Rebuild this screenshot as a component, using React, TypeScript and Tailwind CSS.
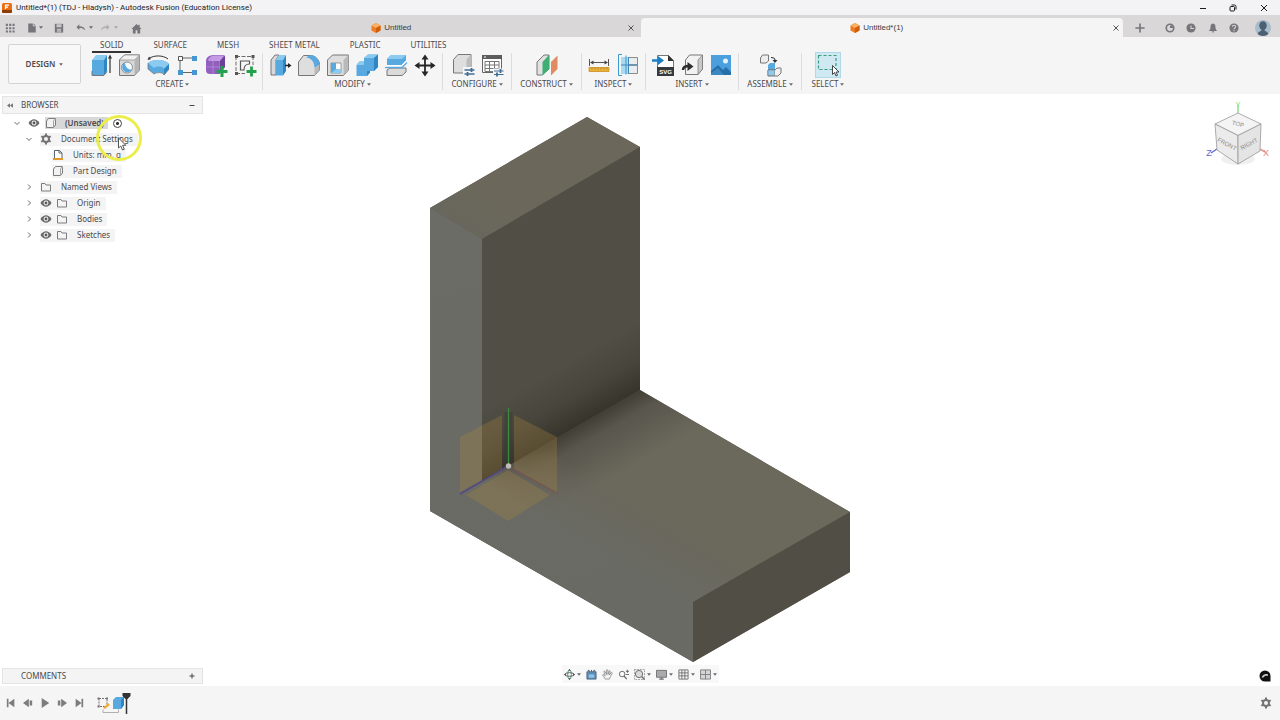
import { type ReactNode, useState } from 'react'
import clsx from 'clsx'

const BLUE = '#57a9e0'
const BLUE_LIGHT = '#8ccbf0'
const BLUE_DARK = '#2f86c4'
const LINE = '#77777a'

function Caret({ className = 'text-[#6b6b6b]' }: { className?: string }) {
  return (
    <svg viewBox="0 0 6 4" className={clsx('h-[3px] w-1 shrink-0', className)} aria-hidden="true">
      <path d="M0 0h6L3 4z" fill="currentColor" />
    </svg>
  )
}

function Icon({ children, className = 'size-6' }: { children: ReactNode; className?: string }) {
  return (
    <svg viewBox="0 0 24 24" fill="none" className={clsx('shrink-0', className)} aria-hidden="true">
      {children}
    </svg>
  )
}

function FusionCube() {
  return (
    <svg viewBox="0 0 20 20" className="size-[10px] shrink-0" aria-hidden="true">
      <path d="M10 0l9 5v10l-9 5-9-5V5z" fill="#ee7d1d" />
      <path d="M10 0l9 5-9 5-9-5z" fill="#f9b064" />
      <path d="M10 10l9-5v10l-9 5z" fill="#cf5d0d" />
    </svg>
  )
}

/* ---------- ribbon icons ---------- */

const extrude = (
  <Icon>
    <path d="M4 7l4-5h11l-3 5z" fill={BLUE_LIGHT} />
    <path d="M4 7h12v15H4z" fill={BLUE} />
    <path d="M16 7l3-5v16l-3 4z" fill={BLUE_DARK} />
    <path d="M4 18v4.500h12l3-4" stroke={LINE} />
    <path d="M22 20V3" stroke="#333" strokeWidth="1.200" />
    <path d="M20 5.500l2-4 2 4z" fill="#333" />
  </Icon>
)

const hole = (
  <Icon>
    <path d="M2.500 7l5-5h15v15l-5 5.500h-15z" fill="#d9d9d9" stroke={LINE} />
    <path d="M2.500 7l5-5h15l-5 5z" fill="#f1f1f1" stroke={LINE} strokeWidth=".6" />
    <path d="M17.500 7l5-5v15l-5 5.500z" fill="#b5b5b5" />
    <circle cx="10" cy="14.500" r="5.500" fill="#f4f9fc" stroke={LINE} strokeWidth=".8" />
    <path d="M8 9.500a5.200 5.200 0 1 0 7 7c-4 .5-7-2.500-7-7z" fill={BLUE} />
  </Icon>
)

const revolve = (
  <Icon>
    <path d="M2 10c4-4 17-4 21 1v5l-5 6c-1-3-7-3-10-1l-6-5z" fill={BLUE} />
    <path d="M2 10c4-4 17-4 21 1l-5 5c-1-3-7-3-10-1z" fill={BLUE_LIGHT} />
    <path d="M18 16l5-5v5l-5 6z" fill={BLUE_DARK} />
    <path d="M3 5.500C8 2 17 2 22 6" stroke="#333" />
    <path d="M1.500 7l1.500-3.500 2 2.700z" fill="#333" />
    <path d="M2 10v6l6 5c3-2 9-2 10 1l5-6" stroke={LINE} strokeWidth=".8" />
  </Icon>
)

const sketchPattern = (
  <Icon>
    <path d="M5 8v9M8 5h9M8 19.500h9" stroke="#666" />
    <path d="M3.500 3.500h4v4h-4z" fill="#fff" stroke="#555" />
    <path d="M17 3h5v5h-5zM3 17h5v5H3zM17 17h5v5h-5z" fill="#4497d2" />
  </Icon>
)

const createForm = (
  <Icon>
    <path d="M2 8c0-4 4-6 8-6h9c3 0 2 3 2 6v6l-5 7H6c-4 0-4-3-4-6z" fill="#9160bd" />
    <path d="M4 7c2-4 5-4.500 8-4.500h8L16 8H5z" fill="#c49be4" />
    <path d="M9 8v13M2.500 14H16M16 8v10M8 2.500L6 8" stroke="#b78bdd" strokeWidth=".8" />
    <path d="M16 8l5-5v11l-5 4z" fill="#6d3f9b" />
    <path d="M18 13v11M12.500 18.500h11" stroke="#21a24b" strokeWidth="3" />
  </Icon>
)

const createSketch = (
  <Icon>
    <path d="M3 3.500h17M3 3v18M20 3v9M3 20.500h9" stroke="#6c6c6c" strokeDasharray="4 1.500" />
    <path d="M2 2h3v3H2zM18.500 2h3v3h-3zM2 19h3v3H2z" fill="#555" />
    <path d="M7.500 8v9H11c0-4 1-6 5.500-6V8z" stroke="#555" strokeWidth="1.200" />
    <path d="M18.500 13.500v10M13.500 18.500h10" stroke="#21a24b" strokeWidth="2.800" />
  </Icon>
)

const pressPull = (
  <Icon>
    <path d="M3 7l4-5h4L8 7v15H3z" fill="#d8d8d8" stroke={LINE} />
    <path d="M8 7l3-5h7l-3 5z" fill={BLUE_LIGHT} />
    <path d="M8 7h7v15.500H8z" fill={BLUE} />
    <path d="M15 7l3-5v16l-3 4.500z" fill={BLUE_DARK} />
    <path d="M17 12.500h4" stroke="#222" strokeWidth="1.500" />
    <path d="M20 10l3.500 2.500L20 15z" fill="#222" />
  </Icon>
)

const fillet = (
  <Icon>
    <path d="M1.500 9l5-6.500H13c6 0 9.500 5 9.500 9V17l-5 5.500h-16z" fill="#dedede" stroke={LINE} />
    <path d="M9 4.500L13 2c5 0 9.500 5 9.500 9.500L17.500 15c0-6-3-10-8.500-10.500z" fill={BLUE} />
    <path d="M17.500 15.500l5-4V17l-5 5.500z" fill="#b9b9b9" />
  </Icon>
)

const shell = (
  <Icon>
    <path d="M1.500 7l5-5h16v15l-5 5.500h-16z" fill="#dedede" stroke={LINE} />
    <path d="M17.500 7l5-5v15l-5 5.500z" fill="#b9b9b9" />
    <path d="M5 10h10v10H5z" fill="#fff" stroke={LINE} strokeWidth=".7" />
    <path d="M5 10h5v6h5v4H5z" fill={BLUE} />
    <path d="M5 20l5-4h5v4z" fill={BLUE_LIGHT} />
  </Icon>
)

const combine = (
  <Icon>
    <path d="M9 5l4-3.500h10V14l-4 4h-4v1.500L12 23H1.500V12l3-3.500H9z" fill={BLUE} />
    <path d="M9 5l4-3.500h10L19 5zM1.500 12l3-3.500H9V12z" fill={BLUE_LIGHT} />
    <path d="M19 5l4-3.500V14l-4 4zM15 18v1.500L12 23v-5z" fill={BLUE_DARK} />
  </Icon>
)

const splitBody = (
  <Icon>
    <path d="M3 6l4-4h15v6l-4 4H3z" fill={BLUE} />
    <path d="M3 6l4-4h15l-4 4z" fill={BLUE_LIGHT} />
    <path d="M3 17l3-2h16v4l-4 3.500H3z" fill="#dadada" stroke={LINE} />
    <path d="M1 13h17l5-5" stroke="#fff" strokeWidth="2" />
    <path d="M1 14.500h17l5-5" stroke={BLUE} strokeWidth="1.300" />
  </Icon>
)

const move = (
  <Icon>
    <path d="M12 4v17M4 12.500h17" stroke="#262626" strokeWidth="1.800" />
    <path d="M12 1.500l3.500 5h-7zM12 23.500l3.500-5h-7zM1.500 12.500l5-3.500v7zM22.500 12.500l-5-3.500v7z" fill="#262626" />
  </Icon>
)

const configure = (
  <Icon>
    <path d="M2.500 6.500l4.500-5h13V15l-5 5H2.500z" fill="#dedede" stroke={LINE} />
    <path d="M15.500 6.500l4.500-5V15l-4.500 5z" fill="#bcbcbc" />
    <path d="M12 14h13v10H12z" fill="#f5f5f5" />
    <path d="M13.500 17h10M13.500 21h10" stroke="#3f6d95" strokeWidth="1.300" />
    <path d="M20.500 15v4M16.500 19v4" stroke="#3f6d95" strokeWidth="1.800" />
  </Icon>
)

const configTable = (
  <Icon>
    <path d="M2.500 2.500h19v17h-19z" fill="#fff" stroke="#666" />
    <path d="M2 2h20v4H2z" fill="#5c5c5c" />
    <path d="M4 4h2" stroke="#fff" />
    <path d="M5 8.500h14v10H5zM5 12h14M5 15.500h14M9.500 8.500v10M14.500 8.500v10" stroke="#777" />
    <path d="M13 15.500h11V24H13z" fill="#f5f5f5" />
    <path d="M14 18h9.500M14 21.500h9.500" stroke="#3f6d95" strokeWidth="1.200" />
    <path d="M20.500 16v4M17 19.500v4" stroke="#3f6d95" strokeWidth="1.800" />
  </Icon>
)

const construct = (
  <Icon>
    <path d="M2 9l7-7h5v14l-7 6H2z" fill="#e1e1e1" stroke={LINE} />
    <path d="M7.500 9L14 2v14l-6.500 6.500z" fill="#3fae72" />
    <path d="M16 9l6.500-6.500V16L16 22.500z" fill="#e08b62" />
  </Icon>
)

const measure = (
  <Icon>
    <path d="M2.500 6v7M21.500 6v7M4 9.500h16" stroke="#555" />
    <path d="M3 9.500l3.500-2v4zM21 9.500l-3.500-2v4z" fill="#444" />
    <path d="M2 14.500h20v4H2z" fill="#eab03c" stroke="#c9901f" strokeWidth=".8" />
    <path d="M5 14.500v2M8 14.500v2M11 14.500v2M14 14.500v2M17 14.500v2M20 14.500v2" stroke="#b5801c" strokeWidth=".8" />
  </Icon>
)

const interference = (
  <Icon>
    <path d="M5 4h8v17H5z" fill="#a8d8f2" />
    <path d="M12.500 4.500h9v7.500h-9zM12.500 12h9v8.500h-9z" fill="#e9edf0" stroke="#8b8b8b" />
    <path d="M5 12h16M12.500 4v17" stroke="#3f87b9" />
    <path d="M6 1.500H2.500v21H6M10 2.500v19" stroke="#3c9acd" />
  </Icon>
)

const insertSvg = (
  <Icon>
    <path d="M6.500 2.500h11l5 5V15h-16z" fill="#fff" stroke="#777" />
    <path d="M17 2l6 6h-6z" fill="#333" />
    <path d="M6 14h17v9H6z" fill="#35393d" />
    <path d="M1 7.500h7" stroke="#1c7fc4" strokeWidth="2.500" />
    <path d="M7 3l6 4.500L7 12z" fill="#1c7fc4" />
    <text x="14.500" y="21" textAnchor="middle" fontSize="6" fontWeight="700" fill="#fff" fontFamily="Liberation Sans, sans-serif">SVG</text>
  </Icon>
)

const insertDerive = (
  <Icon>
    <path d="M5.500 7l4-5h13v14l-4.500 5.500H5.500z" fill="#f2f2f2" stroke={LINE} />
    <path d="M18 7l4.500-5v14L18 21.500z" fill="#c9c9c9" stroke={LINE} strokeWidth=".7" />
    <path d="M3 17c0-3 2-4 6-4" stroke="#2d2d2d" strokeWidth="2.500" />
    <path d="M7.500 9l6 4.500-6 4.500z" fill="#2d2d2d" />
  </Icon>
)

const insertCanvas = (
  <Icon>
    <path d="M2 2h20v20H2z" fill="#4b9fdd" />
    <circle cx="16.500" cy="8" r="2.500" fill="#e6f2fa" />
    <path d="M2 18l7-6 5 5 3-3 5 5v3H2z" fill="#266fa9" />
    <path d="M2 20l7-5 6 7H2z" fill="#3b87bf" />
  </Icon>
)

const assemble = (
  <Icon>
    <path d="M2.500 5l2-3h6v6L8 10H2.500z" fill="#ededed" stroke={LINE} />
    <path d="M13 4.500c3 0 4 .5 4 3" stroke="#333" strokeWidth="1.200" />
    <path d="M14.500 7h5L17 10z" fill="#333" />
    <path d="M10 12l2-2h5v12h-7z" fill={BLUE} />
    <path d="M10 17h7l2-2h4v5l-3 3H10z" fill="#f0f0f0" stroke={LINE} />
    <path d="M10 17h6.500v5.500H10z" fill={BLUE_LIGHT} stroke={LINE} strokeWidth=".6" />
  </Icon>
)

const selectTool = (
  <Icon>
    <path d="M2.500 2.500h17.500v14H2.500z" stroke="#3d9c79" strokeWidth="1.200" strokeDasharray="3 2" />
    <path d="M16.500 12.500v9l2-2 1.500 3.500 1.500-.7-1.500-3.300h3z" fill="#fff" stroke="#333" strokeWidth=".9" />
  </Icon>
)

const RIBBON_TABS = ['SOLID', 'SURFACE', 'MESH', 'SHEET METAL', 'PLASTIC', 'UTILITIES']

interface Tool {
  name: string
  icon: ReactNode
}

const GROUPS: { label: string; width: string; tools: Tool[] }[] = [
  {
    label: 'CREATE',
    width: 'w-[180px]',
    tools: [
      { name: 'Extrude', icon: extrude },
      { name: 'Hole', icon: hole },
      { name: 'Revolve', icon: revolve },
      { name: 'Pattern', icon: sketchPattern },
      { name: 'Create Form', icon: createForm },
      { name: 'Create Sketch', icon: createSketch },
    ],
  },
  {
    label: 'MODIFY',
    width: 'w-[180px]',
    tools: [
      { name: 'Press Pull', icon: pressPull },
      { name: 'Fillet', icon: fillet },
      { name: 'Shell', icon: shell },
      { name: 'Combine', icon: combine },
      { name: 'Split Body', icon: splitBody },
      { name: 'Move', icon: move },
    ],
  },
  {
    label: 'CONFIGURE',
    width: 'w-[69px]',
    tools: [
      { name: 'Configure', icon: configure },
      { name: 'Configuration Table', icon: configTable },
    ],
  },
  { label: 'CONSTRUCT', width: 'w-[70px]', tools: [{ name: 'Offset Plane', icon: construct }] },
  {
    label: 'INSPECT',
    width: 'w-[64px]',
    tools: [
      { name: 'Measure', icon: measure },
      { name: 'Interference', icon: interference },
    ],
  },
  {
    label: 'INSERT',
    width: 'w-[93px]',
    tools: [
      { name: 'Insert SVG', icon: insertSvg },
      { name: 'Insert Derive', icon: insertDerive },
      { name: 'Canvas', icon: insertCanvas },
    ],
  },
  { label: 'ASSEMBLE', width: 'w-[63px]', tools: [{ name: 'Joint', icon: assemble }] },
  { label: 'SELECT', width: 'w-[52px]', tools: [{ name: 'Select', icon: selectTool }] },
]

/* ---------- top bars ---------- */

function TitleBar() {
  return (
    <header className="flex h-[15px] shrink-0 items-center bg-[#f3f2f5] pl-0.5 text-[#1b1b1b]">
      <svg viewBox="0 0 20 20" className="size-[10px] shrink-0" aria-hidden="true">
        <rect width="20" height="20" rx="3" fill="#e96f12" />
        <path d="M0 14h20v3a3 3 0 0 1-3 3H3a3 3 0 0 1-3-3z" fill="#8f3b06" />
        <path d="M7 12V4h7M7 8h5" stroke="#fff" strokeWidth="2.500" fill="none" />
      </svg>
      <h1 className="ml-1 font-[Roboto,sans-serif] text-[8px] leading-3">
        Untitled*(1) (TDJ - Hladysh) - Autodesk Fusion (Education License)
      </h1>
      <div className="ml-auto flex items-center">
        <button aria-label="Minimize" className="flex w-[30px] justify-center">
          <svg viewBox="0 0 8 8" className="size-2" stroke="currentColor" fill="none"><path d="M1 4.500h6" /></svg>
        </button>
        <button aria-label="Restore" className="flex w-[30px] justify-center">
          <svg viewBox="0 0 8 8" className="size-2" stroke="currentColor" fill="none">
            <rect x="1" y="2.500" width="4.500" height="4.500" rx="1" />
            <path d="M2.500 1h3A1.500 1.500 0 0 1 7 2.500v3" />
          </svg>
        </button>
        <button aria-label="Close" className="flex w-[32px] justify-center">
          <svg viewBox="0 0 8 8" className="size-2" stroke="currentColor" fill="none"><path d="M1 1l6 6M7 1L1 7" /></svg>
        </button>
      </div>
    </header>
  )
}

function DocTab({ title, active }: { title: string; active?: boolean }) {
  return (
    <div
      className={clsx(
        'flex min-w-0 flex-1 items-center text-[#3c3c3c]',
        active ? 'rounded-t-sm bg-[#f5f5f6] pr-1' : 'bg-[#d9d7d8] pr-[7px]'
      )}
    >
      <button className="flex h-full flex-1 items-center justify-center gap-[3px]">
        <FusionCube />
        <span className="font-['Liberation_Sans',sans-serif] text-[8px] leading-3">{title}</span>
      </button>
      <button aria-label={`Close ${title}`} className="flex size-[6px] shrink-0">
        <svg viewBox="0 0 6 6" className="size-[6px]" stroke="#555" fill="none"><path d="M.5.5l5 5M5.500.5l-5 5" /></svg>
      </button>
    </div>
  )
}

function TabStrip() {
  return (
    <div className="flex h-[22px] shrink-0 bg-[#d9d7d8] pt-[3px] text-[#77757a]">
      <div className="flex w-[155px] shrink-0 items-center pl-[5px]">
        <button aria-label="Data panel">
          <Icon className="size-[10px]">
            <path d="M2 2h5v5H2zM10 2h5v5h-5zM18 2h5v5h-5zM2 10h5v5H2zM10 10h5v5h-5zM18 10h5v5h-5zM2 18h5v5H2zM10 18h5v5h-5zM18 18h5v5h-5z" fill="currentColor" />
          </Icon>
        </button>
        <button aria-label="File" className="ml-3 flex items-center gap-0.5">
          <Icon className="size-[10px]"><path d="M3 1h11v7h7v15H3zM16 1l5 5h-5z" fill="currentColor" /></Icon>
          <Caret />
        </button>
        <button aria-label="Save" className="ml-[11px]">
          <Icon className="size-[10px]">
            <path d="M2 2h20v21H2z" fill="currentColor" />
            <path d="M6 3h12v7H6zM7 14h10v8H7z" fill="#c9c7c9" />
            <path d="M8 17h8M8 20h8" stroke="currentColor" />
          </Icon>
        </button>
        <button aria-label="Undo" className="ml-3 flex items-center gap-[3px]">
          <Icon className="size-[10px]">
            <path d="M8 3v5c8 0 13 3 14 10-4-5-8-6-14-6v5L1 10z" fill="currentColor" />
          </Icon>
          <Caret />
        </button>
        <button aria-label="Redo" className="ml-[7px] flex items-center gap-1 text-[#b0aeb0]">
          <Icon className="size-[10px]">
            <path d="M16 3v5C8 8 3 11 2 18c4-5 8-6 14-6v5l7-7z" fill="currentColor" />
          </Icon>
          <Caret className="text-[#a5a3a5]" />
        </button>
        <button aria-label="Home" className="ml-[13px] pt-0.5">
          <Icon className="size-[11px]"><path d="M12 2L1 13h3v10h6v-7h4v7h6V13h3l-4-4V4h-3v2z" fill="currentColor" /></Icon>
        </button>
      </div>
      <DocTab title="Untitled" />
      <DocTab title="Untitled*(1)" active />
      <div className="flex w-[157px] shrink-0 items-center justify-between pr-[9px] pl-3">
        <button aria-label="New tab">
          <Icon className="size-[10px]"><path d="M12 1v22M1 12h22" stroke="currentColor" strokeWidth="4" /></Icon>
        </button>
        <button aria-label="Extensions" className="ml-2">
          <Icon className="size-[10px]">
            <circle cx="12" cy="12" r="9" stroke="currentColor" strokeWidth="4" />
            <path d="M12 12V6h7v6z" fill="currentColor" />
          </Icon>
        </button>
        <button aria-label="Job status">
          <Icon className="size-[10px]">
            <circle cx="12" cy="12" r="11" fill="currentColor" />
            <path d="M12 6v7h7" stroke="#d9d7d8" strokeWidth="2.500" />
          </Icon>
        </button>
        <button aria-label="Notifications">
          <Icon className="size-[10px]">
            <path d="M12 1c5 1 6 4 6 9 0 4 1 6 4 9H2c3-3 4-5 4-9 0-5 1-8 6-9zM9 20h6l-3 4z" fill="currentColor" />
          </Icon>
        </button>
        <button aria-label="Help">
          <Icon className="size-[10px]">
            <circle cx="12" cy="12" r="11" fill="currentColor" />
            <path d="M8 9c0-5 8-5 8 0 0 3-4 3-4 6M12 17v3" stroke="#d9d7d8" strokeWidth="2.500" />
          </Icon>
        </button>
        <button aria-label="Account" className="ml-1">
          <Icon className="size-4">
            <circle cx="12" cy="12" r="12" fill="#a9bccb" />
            <path d="M4 21c1-4 5-4 6-6-6-4-4-13 2-13s8 9 2 13c1 2 5 2 6 6-4 4-12 4-16 0z" fill="#4c6074" />
          </Icon>
        </button>
      </div>
    </div>
  )
}

function Ribbon() {
  const [tab, setTab] = useState('SOLID')

  return (
    <div className="flex h-[57px] shrink-0 bg-[#f5f5f6] text-[8px] leading-[10px] text-[#4a4a4c]">
      <button className="mt-[7px] ml-2 flex h-10 w-[73px] shrink-0 items-center justify-center gap-1 rounded-xs border border-[#d3d3d5] bg-[#f8f8f9] font-semibold">
        DESIGN
        <Caret />
      </button>
      <div className="ml-0.5 flex min-w-0 flex-col">
        <nav className="ml-[9px] flex h-4 gap-[14px]">
          {RIBBON_TABS.map((name) => (
            <button
              key={name}
              onClick={() => setTab(name)}
              className={clsx(
                'border-b-2 px-2 pt-px',
                tab === name ? 'border-[#333]' : 'border-transparent'
              )}
            >
              {name}
            </button>
          ))}
        </nav>
        <div className="flex h-[37px]">
          {GROUPS.map((group) => (
            <section
              key={group.label}
              className={clsx(
                'flex shrink-0 flex-col items-center border-[#dcdcde] not-last:border-r',
                group.width
              )}
            >
              <div className="flex gap-[5px]">
                {group.tools.map((tool) => (
                  <button
                    key={tool.name}
                    aria-label={tool.name}
                    className={clsx(tool.name === 'Select' && 'bg-[#cfe9f3] outline outline-[#b0d8e8]')}
                  >
                    {tool.icon}
                  </button>
                ))}
              </div>
              <button className="mt-0.5 flex items-center gap-0.5">
                {group.label}
                <Caret />
              </button>
            </section>
          ))}
        </div>
      </div>
    </div>
  )
}

/* ---------- browser panel ---------- */

function Chevron({ open }: { open?: boolean }) {
  return (
    <svg viewBox="0 0 12 12" className="size-3" fill="none" stroke="#6a6a6c">
      <path d={open ? 'M3.500 5L6 7.500 8.500 5' : 'M5 3.500L7.500 6 5 8.500'} />
    </svg>
  )
}

function Eye() {
  return (
    <svg viewBox="0 0 12 12" className="size-3" aria-hidden="true">
      <path d="M.5 6c3-5 8-5 11 0-3 5-8 5-11 0z" fill="#6a6a6c" />
      <circle cx="6" cy="6" r="2.400" fill="#f2f2f2" />
      <circle cx="6" cy="6" r="1.400" fill="#5a5a5c" />
    </svg>
  )
}

function Folder() {
  return (
    <svg viewBox="0 0 12 12" className="size-3" fill="none" stroke="#7c7c7e" aria-hidden="true">
      <path d="M1.500 10V2.500H5l1 1.500h4.500v6z" />
    </svg>
  )
}

function PartIcon() {
  return (
    <svg viewBox="0 0 12 12" className="size-3" fill="#f2f2f2" stroke="#7c7c7e" aria-hidden="true">
      <path d="M1.500 4l2-2.500h7V8l-2 2.500h-7z" />
      <path d="M8.500 10.500V4l2-2.500" stroke="#a4a4a6" />
    </svg>
  )
}

function Gear({ className = 'size-3' }: { className?: string }) {
  return (
    <svg viewBox="0 0 24 24" className={className} fill="none" stroke="#747476" aria-hidden="true">
      <circle cx="12" cy="12" r="6" strokeWidth="4" />
      <path d="M12 1v5M12 18v5M2.500 6.500L7 9M17 15l4.500 2.500M2.500 17.500L7 15M17 9l4.500-2.500" strokeWidth="4" />
    </svg>
  )
}

function UnitsIcon() {
  return (
    <svg viewBox="0 0 12 12" className="size-3" aria-hidden="true">
      <path d="M2.500 9V1.500h5l2.500 2.500v5" fill="#fff" stroke="#5b6470" />
      <path d="M7 1.500V4h3" fill="none" stroke="#5b6470" />
      <path d="M1 9h10v2H1z" fill="#e09a2a" />
    </svg>
  )
}

interface TreeNode {
  label: string
  indent: string
  open?: boolean
  leaf?: boolean
  visible?: boolean
  icon: ReactNode
}

const TREE: TreeNode[] = [
  { label: 'Document Settings', indent: 'pl-[21px]', open: true, icon: <Gear /> },
  { label: 'Units: mm, g', indent: 'pl-[50px]', leaf: true, icon: <UnitsIcon /> },
  { label: 'Part Design', indent: 'pl-[50px]', leaf: true, icon: <PartIcon /> },
  { label: 'Named Views', indent: 'pl-[21px]', icon: <Folder /> },
  { label: 'Origin', indent: 'pl-[21px]', visible: true, icon: <Folder /> },
  { label: 'Bodies', indent: 'pl-[21px]', visible: true, icon: <Folder /> },
  { label: 'Sketches', indent: 'pl-[21px]', visible: true, icon: <Folder /> },
]

function Browser() {
  return (
    <div className="relative">
      <div className="flex h-[18px] items-center border border-[#e4e4e5] bg-[#f4f4f5] px-1">
        <button aria-label="Collapse panel">
          <svg viewBox="0 0 8 6" className="h-[5px] w-[6px]" fill="#777"><path d="M4 0v6L0 3zM8 0v6L4 3z" /></svg>
        </button>
        <h2 className="ml-2">BROWSER</h2>
        <button aria-label="Minimize browser" className="mr-0.5 ml-auto">
          <svg viewBox="0 0 8 8" className="size-2" stroke="#444" fill="none"><path d="M1.500 4.500h5" /></svg>
        </button>
      </div>
      <ul className="mt-px">
        <li className="flex h-4 items-center gap-[5px] pl-[9px]">
          <button aria-label="Collapse (Unsaved)"><Chevron open /></button>
          <button aria-label="Toggle visibility"><Eye /></button>
          <span className="flex h-3 items-center gap-2 bg-[#d8d8d9] pr-1 font-semibold">
            <PartIcon />
            (Unsaved)
          </span>
          <label className="flex">
            <input
              type="radio"
              name="active-component"
              defaultChecked
              aria-label="Activate component"
              className="size-[9px] appearance-none rounded-full border border-[#444] bg-[radial-gradient(circle,#2f2f2f_1px,#fff_2px)]"
            />
          </label>
        </li>
        {TREE.map((node) => (
          <li key={node.label} className={clsx('flex h-4 items-center gap-[5px]', node.indent)}>
            {!node.leaf && (
              <button aria-label={`Expand ${node.label}`}><Chevron open={node.open} /></button>
            )}
            <span className="flex h-[13px] items-center bg-[#f4f4f5] pr-[5px]">
              {node.visible && <button aria-label={`Toggle ${node.label}`} className="mr-1"><Eye /></button>}
              {node.icon}
              <span className="ml-[9px]">{node.label}</span>
            </span>
          </li>
        ))}
      </ul>
      {/* click highlight and pointer */}
      <svg viewBox="0 0 48 48" className="pointer-events-none absolute top-[18px] left-[93px] size-12" fill="none" aria-hidden="true">
        <circle cx="24" cy="24" r="21.500" stroke="#ebee4a" strokeWidth="3" />
        <path d="M23.500 24v10l2.300-2 1.700 4 1.800-.8-1.700-3.900h3.200z" fill="#fff" stroke="#444" strokeWidth=".9" />
      </svg>
    </div>
  )
}

/* ---------- canvas ---------- */

function Model() {
  return (
    <svg viewBox="430 117 420 546" className="min-h-0 w-full flex-1" role="img" aria-label="L-shaped bracket">
      <defs>
        <linearGradient id="wall" gradientUnits="userSpaceOnUse" x1="561" y1="435" x2="531" y2="383">
          <stop offset="0" stopColor="#37342c" />
          <stop offset=".45" stopColor="#48453c" />
          <stop offset="1" stopColor="#514e45" />
        </linearGradient>
        <linearGradient id="floor" gradientUnits="userSpaceOnUse" x1="561" y1="435" x2="592" y2="489">
          <stop offset="0" stopColor="#413e36" />
          <stop offset=".3" stopColor="#58564d" />
          <stop offset="1" stopColor="#6b685c" />
        </linearGradient>
        <linearGradient id="floorEdge" gradientUnits="userSpaceOnUse" x1="587" y1="541" x2="617" y2="489">
          <stop offset="0" stopColor="#696a63" />
          <stop offset="1" stopColor="#696a63" stopOpacity="0" />
        </linearGradient>
        <linearGradient id="cap" gradientUnits="userSpaceOnUse" x1="450" y1="226" x2="480" y2="190">
          <stop offset="0" stopColor="#68675d" />
          <stop offset="1" stopColor="#6b675b" />
        </linearGradient>
        <linearGradient id="side" gradientUnits="userSpaceOnUse" x1="450" y1="210" x2="600" y2="600">
          <stop offset="0" stopColor="#6a6c65" />
          <stop offset="1" stopColor="#696a63" />
        </linearGradient>
      </defs>
      {/* solid backing keeps the face joints from showing as hairlines */}
      <path d="M587 117l53 30v243l210 122v60l-157 90L430 511V208z" fill="#5d5b52" />
      <path d="M587 117l53 30-158 92-52-31z" fill="url(#cap)" />
      <path d="M640 390l210 122-157 90-211-121z" fill="url(#floor)" />
      <path d="M640 390l210 122-157 90-211-121z" fill="url(#floorEdge)" />
      <path d="M430 208l52 31v241l211 121v61L430 511z" fill="url(#side)" />
      <path d="M482 239l158-92v243l-158 91z" fill="url(#wall)" />
      <path d="M693 602l157-90v60l-157 90z" fill="#514e45" />

      {/* origin planes and axes */}
      <g fill="#a88640" opacity=".3">
        <path d="M460 437l42-22v54l-42 23z" />
        <path d="M514 415l43 22v55l-43-23z" />
        <path d="M508 470l42 25-42 26-42-26z" />
      </g>
      <path d="M508.500 412v50" stroke="#343c30" strokeWidth="8" opacity=".4" />
      <path d="M508.500 408v57" stroke="#3c8a42" strokeWidth="1.300" />
      <path d="M508 466l-48 28" stroke="#554a80" strokeWidth="1.500" />
      <path d="M508 466l50 28" stroke="#85504a" strokeWidth="1.500" opacity=".6" />
      <circle cx="508.500" cy="466" r="2.700" fill="#bdbdb5" />
    </svg>
  )
}

function ViewCube() {
  return (
    <svg viewBox="0 0 66 72" className="h-[72px] w-[66px]" fontFamily="Liberation Sans, sans-serif" textAnchor="middle" aria-label="View cube">
      <path d="M33 15V7" stroke="#8fe08f" strokeWidth="1.500" />
      <path d="M12 51l-6 4" stroke="#6868d8" strokeWidth="1.500" />
      <path d="M55 51l5 3" stroke="#e09a92" strokeWidth="1.500" />
      <ellipse cx="33" cy="61" rx="17" ry="6" fill="#f0f0f0" />
      <path d="M33 15l23 11-23 11.500L10 26z" fill="#f4f4f4" stroke="#989898" strokeWidth=".8" />
      <path d="M10 26l23 11.500V66L12 52z" fill="#ebebeb" stroke="#989898" strokeWidth=".8" />
      <path d="M56 26L33 37.500V66l22-13z" fill="#e4e4e4" stroke="#989898" strokeWidth=".8" />
      <text x="33" y="28" fontSize="6" fill="#8a8a8a" transform="rotate(14 33 26)">TOP</text>
      <text x="22" y="48" fontSize="6" fill="#8a8a8a" transform="rotate(28 22 46)">FRONT</text>
      <text x="44" y="48" fontSize="6" fill="#8a8a8a" transform="rotate(-28 44 46)">RIGHT</text>
      <text x="33" y="9" fontSize="8" fill="#7fdc7f">Y</text>
      <text x="4" y="58" fontSize="9" fill="#6464d2">Z</text>
      <text x="61" y="58" fontSize="9" fill="#e8807a">X</text>
    </svg>
  )
}

const NAV_TOOLS: { name: string; menu?: boolean; icon: ReactNode }[] = [
  {
    name: 'Orbit',
    menu: true,
    icon: (
      <>
        <ellipse cx="12" cy="12" rx="10" ry="4" stroke="#555" strokeWidth="2" />
        <ellipse cx="12" cy="12" rx="4" ry="10" stroke="#4b8f7c" strokeWidth="2" />
        <path d="M12 0l3 4H9zM12 24l3-4H9zM0 12l4-3v6zM24 12l-4-3v6z" fill="#444" />
      </>
    ),
  },
  {
    name: 'Look At',
    icon: (
      <>
        <path d="M2 6h20v16H2z" fill="#5c8fb8" stroke="#4e6a83" strokeWidth="2" />
        <path d="M4 3h3v3M12 2v4M20 3h-3v3" stroke="#555" strokeWidth="2" />
        <path d="M6 12h12v7H6z" fill="#8fc4e8" />
      </>
    ),
  },
  {
    name: 'Pan',
    icon: (
      <path
        d="M7 22c-1-4-4-6-6-9 2-2 4 0 6 2L4 5c2-1 3 0 3 1l3 6V2c2-1 3 0 3 1v9l3-8c2-1 3 1 2 2l-2 7 4-5c2-1 3 1 2 2-3 4-4 8-6 12z"
        fill="#f4f4f4"
        stroke="#777"
        strokeWidth="1.500"
      />
    ),
  },
  {
    name: 'Zoom',
    icon: (
      <>
        <circle cx="9" cy="11" r="6" stroke="#666" strokeWidth="2" />
        <path d="M13 15l6 7" stroke="#666" strokeWidth="3" />
        <path d="M17 5h7M20.500 1.500v7M17 12h7" stroke="#555" strokeWidth="1.800" />
      </>
    ),
  },
  {
    name: 'Fit',
    menu: true,
    icon: (
      <>
        <path d="M1 1h22v22H1z" stroke="#777" strokeWidth="1.500" strokeDasharray="4 2" />
        <circle cx="11" cy="11" r="8" fill="#d8dadb" stroke="#666" strokeWidth="2" />
        <path d="M17 17l6 6" stroke="#666" strokeWidth="3" />
      </>
    ),
  },
  {
    name: 'Display Settings',
    menu: true,
    icon: (
      <>
        <path d="M1 3h22v15H1z" fill="#a8aaac" stroke="#6d6d6f" strokeWidth="2" />
        <path d="M7 22h10M12 18v4" stroke="#6d6d6f" strokeWidth="3" />
      </>
    ),
  },
  {
    name: 'Grid and Snaps',
    menu: true,
    icon: <path d="M2 2h20v20H2zM2 8.500h20M2 15h20M8.500 2v20M15 2v20" stroke="#6d6d6f" strokeWidth="2" />,
  },
  {
    name: 'Viewports',
    menu: true,
    icon: (
      <path d="M1 2h22v20H1zM12 2v20M1 12h22" fill="#d4d4d6" stroke="#7d7d7f" strokeWidth="2" />
    ),
  },
]

function NavBar() {
  return (
    <div className="mx-auto mt-0.5 flex h-[18px] shrink-0 items-center gap-[5px] bg-[#f8f8f8] px-0.5">
      {NAV_TOOLS.map((tool) => (
        <button key={tool.name} aria-label={tool.name} className="flex items-center gap-0.5">
          <Icon className="size-[11px]">{tool.icon}</Icon>
          {tool.menu && <Caret />}
        </button>
      ))}
    </div>
  )
}

/* ---------- timeline ---------- */

const PLAYBACK = [
  { name: 'Go to start', d: 'M1 1h2v10H1zM10 1v10L3 6z' },
  { name: 'Step back', d: 'M7 1v10L0 6zM8 3h3v6H8z' },
  { name: 'Play', d: 'M2 0l9 6-9 6z' },
  { name: 'Step forward', d: 'M5 1v10l7-5zM1 3h3v6H1z' },
  { name: 'Go to end', d: 'M9 1h2v10H9zM2 1v10l7-5z' },
]

function Timeline() {
  return (
    <footer className="flex h-[34px] shrink-0 items-center bg-[#f5f5f6] pr-2 pl-1.5">
      <div className="flex gap-[7px]">
        {PLAYBACK.map((btn) => (
          <button key={btn.name} aria-label={btn.name}>
            <svg viewBox="0 0 12 12" className="size-[10px]" fill="#7c7c7e"><path d={btn.d} /></svg>
          </button>
        ))}
      </div>
      <svg viewBox="0 0 36 24" className="ml-3 h-6 w-9" fill="none" role="img" aria-label="Timeline features">
        <path d="M3 7.500h8v8H3z" stroke="#7b6a6a" strokeDasharray="2 1" />
        <path d="M1.500 6.500h2v2h-2zM10 6.500h2v2h-2zM1.500 14.500h2v2h-2z" fill="#777" />
        <path d="M7 17l5-5 2 2-5 4z" fill="#edb13f" />
        <path d="M17 9l3-3h8v8l-3 4h-8z" fill={BLUE} />
        <path d="M25 9l3-3v8l-3 4z" fill={BLUE_DARK} />
        <path d="M7 18.500v3h15.500v-3" stroke="#b0b0b2" />
        <path d="M26.500 2h8v3l-3 3h-2l-3-3z" fill="#333" />
        <path d="M30.500 5v18" stroke="#333" strokeWidth="1.500" />
      </svg>
      <button aria-label="Timeline settings" className="ml-auto">
        <Gear />
      </button>
    </footer>
  )
}

export default function App() {
  return (
    <div className="flex h-screen flex-col overflow-hidden bg-white font-['Noto_Sans',sans-serif] text-[8px] leading-[10px] text-[#4a4a4c]">
      <TitleBar />
      <TabStrip />
      <Ribbon />
      <main className="flex min-h-0 flex-1">
        <aside className="flex w-[203px] shrink-0 flex-col justify-between pt-0.5 pb-0.5 pl-0.5">
          <Browser />
          <div className="flex h-4 items-center border border-[#e4e4e5] bg-[#f4f4f5] pr-1.5 pl-[18px]">
            <h2>COMMENTS</h2>
            <button aria-label="Add comment" className="ml-auto">
              <svg viewBox="0 0 8 8" className="size-2" stroke="#444" fill="none"><path d="M1.500 4h5M4 1.500v5" /></svg>
            </button>
          </div>
        </aside>
        <div className="flex min-w-0 flex-1 flex-col pt-[23px] pb-[3px]">
          <Model />
          <NavBar />
        </div>
        <div className="flex w-[203px] shrink-0 flex-col items-end justify-between pt-1 pr-[9px] pb-1">
          <ViewCube />
          <button aria-label="Assistant">
            <Icon className="size-3">
              <path d="M12 1a11 11 0 1 0 0 22h11V12A11 11 0 0 0 12 1z" fill="#111" />
              <path d="M5 15c4-7 8-8 13-6v3c-5-1-7 0-9 3z" fill="#ccc" />
            </Icon>
          </button>
        </div>
      </main>
      <Timeline />
    </div>
  )
}
